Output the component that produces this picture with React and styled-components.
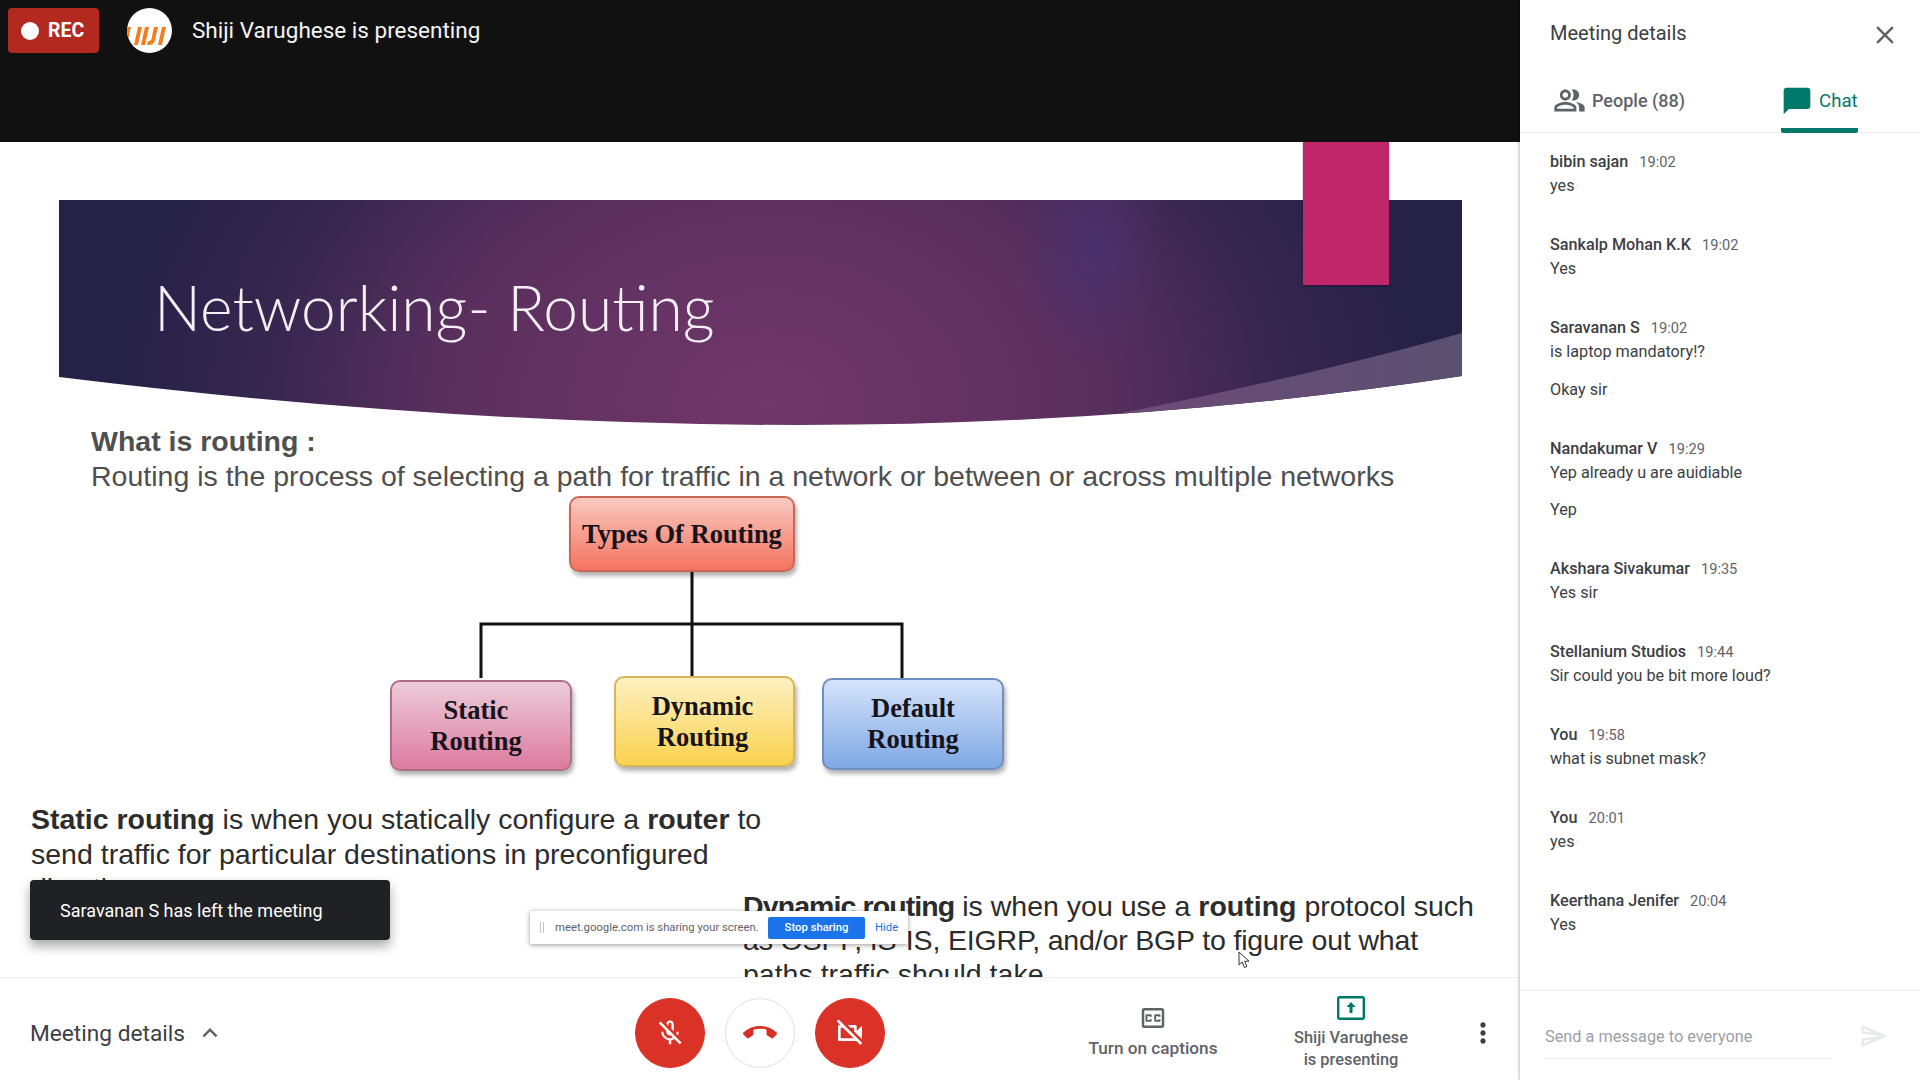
import styled, { createGlobalStyle } from "styled-components";
import {
  MdClose,
  MdOutlinePeopleAlt,
  MdChatBubble,
  MdExpandLess,
  MdOutlineMicOff,
  MdCallEnd,
  MdOutlineVideocamOff,
  MdOutlineClosedCaption,
  MdMoreVert,
  MdOutlineSend,
} from "react-icons/md";

const messages = [
  { name: "bibin sajan", time: "19:02", lines: ["yes"] },
  { name: "Sankalp Mohan K.K", time: "19:02", lines: ["Yes"] },
  { name: "Saravanan S", time: "19:02", lines: ["is laptop mandatory!?", "Okay sir"] },
  { name: "Nandakumar V", time: "19:29", lines: ["Yep already u are auidiable", "Yep"] },
  { name: "Akshara Sivakumar", time: "19:35", lines: ["Yes sir"] },
  { name: "Stellanium Studios", time: "19:44", lines: ["Sir could you be bit more loud?"] },
  { name: "You", time: "19:58", lines: ["what is subnet mask?"] },
  { name: "You", time: "20:01", lines: ["yes"] },
  { name: "Keerthana Jenifer", time: "20:04", lines: ["Yes"] },
];

const nodes = [
  { label: ["Types Of Routing"], x: 569, y: 496, w: 226, h: 76, from: "#f9c9c0", to: "#f4735f", edge: "#c9665a", nudge: 0 },
  { label: ["Static", "Routing"], x: 390, y: 680, w: 182, h: 91, from: "#eccbd8", to: "#dd7ba0", edge: "#ad6f88", nudge: 10 },
  { label: ["Dynamic", "Routing"], x: 614, y: 676, w: 181, h: 91, from: "#fdf0c0", to: "#fbd24f", edge: "#d8b45a", nudge: 4 },
  { label: ["Default", "Routing"], x: 822, y: 678, w: 182, h: 92, from: "#d5e3fb", to: "#7fa8e4", edge: "#6f8fc0", nudge: 0 },
];

const bannerShape = "M0 0H1403V176Q1080 225 740 225Q390 225 0 177Z";

const GlobalStyle = createGlobalStyle`
  html, body {
    margin: 0;
    padding: 0;
    background: #fff;
  }
  body {
    font-family: Roboto, "Noto Sans", sans-serif;
  }
`;

const App = () => {
  return (
    <>
      <GlobalStyle />
      <Page>
        <Main>
          <TopBar>
            <RecBadge>
              <RecDot />
              REC
            </RecBadge>
            <Avatar>
              <svg width="45" height="45" viewBox="0 0 45 45">
                <g fill="#f57c1f">
                  <path d="M0 19h4l-4 18z" />
                  <path d="M11 19h4l-4 18H7z" />
                  <path d="M18 19h4l-4 18h-4z" />
                  <path d="M27 19h4l-3 13q-1 5-6 5h-2l1-4h1q2 0 2.5-2z" />
                  <path d="M35 19h4l-4 18h-4z" />
                </g>
              </svg>
            </Avatar>
            <PresenterName>Shiji Varughese is presenting</PresenterName>
          </TopBar>

          <Slide>
            <Banner viewBox="0 0 1403 225" width="1403" height="225">
              <defs>
                <radialGradient id="bannerGlow" gradientUnits="userSpaceOnUse" cx="710" cy="190" r="650" gradientTransform="translate(0 60) scale(1 .75)">
                  <stop offset="0" stopColor="#71386a" />
                  <stop offset="0.5" stopColor="#5a2f5e" />
                  <stop offset="0.8" stopColor="#34264f" />
                  <stop offset="1" stopColor="#262147" />
                </radialGradient>
                <radialGradient id="bannerSpot">
                  <stop offset="0" stopColor="#4a3270" stopOpacity="0.85" />
                  <stop offset="1" stopColor="#4a3270" stopOpacity="0" />
                </radialGradient>
                <linearGradient id="bannerWedge" x1="0" y1="0" x2="1" y2="0">
                  <stop offset="0" stopColor="#6e4a78" />
                  <stop offset="1" stopColor="#5a5070" />
                </linearGradient>
                <clipPath id="bannerClip">
                  <path d={bannerShape} />
                </clipPath>
              </defs>
              <path d={bannerShape} fill="url(#bannerGlow)" />
              <ellipse cx="1031" cy="50" rx="75" ry="115" fill="url(#bannerSpot)" clipPath="url(#bannerClip)" />
              <path d="M1403 133Q1265 172.5 1058 214V230H1403Z" fill="url(#bannerWedge)" clipPath="url(#bannerClip)" />
            </Banner>
            <Bookmark />
            <SlideTitle>Networking- Routing</SlideTitle>

            <Lead>
              <strong>What is routing :</strong>
              <br />
              Routing is the process of selecting a path for traffic in a network or between or across multiple networks
            </Lead>

            <Connectors viewBox="0 0 1520 835" width="1520" height="835">
              <path d="M692 430V534M481 536V482H902V536" fill="none" stroke="#111" strokeWidth="3" />
            </Connectors>
            {nodes.map((node) => (
              <DiagramNode
                key={node.label[0]}
                $x={node.x}
                $y={node.y - 142}
                $w={node.w}
                $h={node.h}
                $from={node.from}
                $to={node.to}
                $edge={node.edge}
                $nudge={node.nudge}
              >
                {node.label.map((line) => (
                  <span key={line}>{line}</span>
                ))}
              </DiagramNode>
            ))}

            <StaticNote>
              <strong>Static routing</strong> is when you statically configure a <strong>router</strong> to send traffic
              for particular destinations in preconfigured directions.
            </StaticNote>
            <DynamicNote>
              <NarrowBold>Dynamic routing</NarrowBold> is when you use a <strong>routing</strong> protocol such{" "}
              <TightRun>as OSPF, IS-IS, EIGRP, and/or BGP to figure out what</TightRun> paths traffic should take
            </DynamicNote>

            <Toast>Saravanan S has left the meeting</Toast>

            <ShareBar>
              <Grip />
              <ShareText>meet.google.com is sharing your screen.</ShareText>
              <StopButton>Stop sharing</StopButton>
              <HideLink>Hide</HideLink>
            </ShareBar>

            <Pointer width="14" height="18" viewBox="0 0 14 18">
              <path d="M1 1v13l3.2-3 2.3 5.5 2.4-1-2.3-5.3H11z" fill="#fff" stroke="#333" strokeWidth="1" />
            </Pointer>
          </Slide>

          <BottomBar>
            <DetailsToggle>
              Meeting details
              <MdExpandLess size={30} color="#5f6368" />
            </DetailsToggle>
            <CallControls>
              <RoundButton $danger>
                <MdOutlineMicOff size={30} />
              </RoundButton>
              <RoundButton>
                <MdCallEnd size={34} />
              </RoundButton>
              <RoundButton $danger>
                <MdOutlineVideocamOff size={32} />
              </RoundButton>
            </CallControls>
            <Actions>
              <CaptionsAction>
                <MdOutlineClosedCaption size={30} color="#5f6368" />
                <span>Turn on captions</span>
              </CaptionsAction>
              <PresentAction>
                <svg width="28" height="24" viewBox="0 0 28 24">
                  <rect x="1.2" y="1.2" width="25.6" height="21.6" rx="1.5" fill="none" stroke="#00796b" strokeWidth="2.4" />
                  <path d="M14 6l-4.5 5h3v6h3v-6h3z" fill="#00796b" />
                </svg>
                <span>
                  Shiji Varughese
                  <br />
                  is presenting
                </span>
              </PresentAction>
              <MoreButton>
                <MdMoreVert size={32} />
              </MoreButton>
            </Actions>
          </BottomBar>
        </Main>

        <Sidebar>
          <SideHeader>
            <SideTitle>Meeting details</SideTitle>
            <MdClose size={30} color="#5f6368" />
          </SideHeader>
          <Tabs>
            <Tab>
              <MdOutlinePeopleAlt size={33} />
              People (88)
            </Tab>
            <Tab $active>
              <MdChatBubble size={32} />
              Chat
            </Tab>
          </Tabs>
          <ChatList>
            {messages.map((msg, i) => (
              <MessageGroup key={i}>
                <MessageHead>
                  <Sender>{msg.name}</Sender>
                  <Time>{msg.time}</Time>
                </MessageHead>
                {msg.lines.map((line) => (
                  <MessageLine key={line}>{line}</MessageLine>
                ))}
              </MessageGroup>
            ))}
          </ChatList>
          <Composer>
            <ComposerInput>Send a message to everyone</ComposerInput>
            <MdOutlineSend size={30} color="#e8eaed" />
          </Composer>
        </Sidebar>
      </Page>
    </>
  );
};

const Page = styled.div`
  width: 1920px;
  height: 1080px;
  display: grid;
  grid-template-columns: 1520px 400px;
  overflow: hidden;
  background: #fff;
`;

const Main = styled.div`
  display: flex;
  flex-direction: column;
  min-width: 0;
`;

const TopBar = styled.div`
  height: 142px;
  flex: none;
  box-sizing: border-box;
  background: #111111;
  padding: 8px;
  display: flex;
  align-items: flex-start;
`;

const RecBadge = styled.div`
  width: 91px;
  height: 45px;
  box-sizing: border-box;
  padding-left: 13px;
  display: flex;
  align-items: center;
  gap: 9px;
  background: #b3291f;
  border-radius: 4px;
  color: #fff;
  font-size: 19.5px;
  font-weight: 700;
`;

const RecDot = styled.span`
  width: 18px;
  height: 18px;
  border-radius: 50%;
  background: #fff;
`;

const Avatar = styled.div`
  width: 45px;
  height: 45px;
  margin-left: 28px;
  border-radius: 50%;
  background: #fff;
  overflow: hidden;
  svg {
    display: block;
  }
`;

const PresenterName = styled.div`
  margin-left: 20px;
  line-height: 45px;
  font-size: 22.5px;
  color: #f5f5f5;
`;

/* the shared slide is a free canvas, so what sits on it is placed by coordinates */
const Slide = styled.div`
  position: relative;
  flex: 1;
  overflow: hidden;
  background: #fff;
`;

const Banner = styled.svg`
  position: absolute;
  left: 59px;
  top: 58px;
`;

const Bookmark = styled.div`
  position: absolute;
  left: 1303px;
  top: 0;
  width: 86px;
  height: 143px;
  background: #c0266a;
  box-shadow: 0 1px 2px rgba(0, 0, 0, 0.4);
`;

const SlideTitle = styled.div`
  position: absolute;
  left: 154px;
  top: 127px;
  font-family: Lato, sans-serif;
  font-weight: 300;
  font-size: 62.3px;
  line-height: 76px;
  color: #f3eff3;
  white-space: nowrap;
`;

const Lead = styled.div`
  position: absolute;
  left: 91px;
  top: 282px;
  font-family: "Liberation Sans", Arial, sans-serif;
  font-size: 28.5px;
  line-height: 35px;
  color: #4f4f4f;
  white-space: nowrap;
`;

const Connectors = styled.svg`
  position: absolute;
  left: 0;
  top: 0;
`;

const DiagramNode = styled.div`
  position: absolute;
  left: ${(p) => p.$x}px;
  top: ${(p) => p.$y}px;
  width: ${(p) => p.$w}px;
  height: ${(p) => p.$h}px;
  box-sizing: border-box;
  padding-right: ${(p) => p.$nudge}px;
  display: flex;
  flex-direction: column;
  align-items: center;
  justify-content: center;
  border: 2px solid ${(p) => p.$edge};
  border-radius: 10px;
  background: linear-gradient(${(p) => p.$from}, ${(p) => p.$to});
  box-shadow: 2px 4px 4px rgba(0, 0, 0, 0.3);
  font-family: "Liberation Serif", "Times New Roman", serif;
  font-weight: 700;
  font-size: 26.5px;
  line-height: 31px;
  color: #16131a;
`;

const Note = styled.div`
  position: absolute;
  width: 745px;
  font-family: "Liberation Sans", Arial, sans-serif;
  font-size: 28.5px;
  line-height: 34.5px;
  color: #2c2c2c;
`;

const StaticNote = styled(Note)`
  left: 31px;
  top: 660px;
`;

const DynamicNote = styled(Note)`
  left: 743px;
  top: 747px;
  line-height: 34px;
`;

const NarrowBold = styled.strong`
  letter-spacing: -0.9px;
`;

const TightRun = styled.span`
  letter-spacing: -0.16px;
`;

const Toast = styled.div`
  position: absolute;
  left: 30px;
  top: 738px;
  width: 360px;
  height: 60px;
  box-sizing: border-box;
  padding-left: 30px;
  display: flex;
  align-items: center;
  background: #202124;
  border-radius: 4px;
  box-shadow: 0 6px 12px rgba(0, 0, 0, 0.35);
  color: #fff;
  font-size: 18px;
`;

const ShareBar = styled.div`
  position: absolute;
  left: 530px;
  top: 769px;
  width: 378px;
  height: 33px;
  box-sizing: border-box;
  display: flex;
  align-items: center;
  background: #fff;
  box-shadow: 0 1px 5px rgba(0, 0, 0, 0.4);
  font-size: 11.3px;
`;

const Grip = styled.span`
  width: 4px;
  height: 11px;
  margin: 0 0 0 10px;
  border-left: 1px solid #c4c4c4;
  border-right: 1px solid #c4c4c4;
  box-sizing: border-box;
`;

const ShareText = styled.span`
  margin-left: 11px;
  width: 213px;
  color: #5f6368;
  white-space: nowrap;
`;

const StopButton = styled.span`
  width: 97px;
  height: 22px;
  display: flex;
  align-items: center;
  justify-content: center;
  background: #1a73e8;
  border-radius: 2px;
  color: #fff;
  font-weight: 500;
`;

const HideLink = styled.span`
  margin-left: 10px;
  color: #1a73e8;
`;

const Pointer = styled.svg`
  position: absolute;
  left: 1238px;
  top: 809px;
`;

const BottomBar = styled.div`
  height: 103px;
  flex: none;
  box-sizing: border-box;
  padding-top: 8px;
  border-top: 1px solid #eceded;
  background: #fff;
  display: grid;
  grid-template-columns: 1fr auto 1fr;
  align-items: center;
`;

const DetailsToggle = styled.div`
  padding-left: 30px;
  display: flex;
  align-items: center;
  gap: 10px;
  font-size: 22.7px;
  color: #3c4043;
`;

const CallControls = styled.div`
  display: flex;
  gap: 20px;
`;

const RoundButton = styled.div`
  width: 70px;
  height: 70px;
  box-sizing: border-box;
  border-radius: 50%;
  display: flex;
  align-items: center;
  justify-content: center;
  background: ${(p) => (p.$danger ? "#da3226" : "#fff")};
  border: 1px solid ${(p) => (p.$danger ? "#da3226" : "#e0e0e0")};
  color: ${(p) => (p.$danger ? "#fff" : "#d93025")};
`;

const Actions = styled.div`
  display: flex;
  align-items: center;
  justify-content: flex-end;
  padding-right: 21px;
`;

const ActionItem = styled.div`
  display: flex;
  flex-direction: column;
  align-items: center;
  text-align: center;
  font-weight: 500;
  color: #5f6368;
`;

const CaptionsAction = styled(ActionItem)`
  width: 160px;
  gap: 5px;
  margin-top: -6px;
  font-size: 17.2px;
`;

const PresentAction = styled(ActionItem)`
  width: 170px;
  margin-left: 33px;
  gap: 7px;
  font-size: 16.4px;
  line-height: 22px;
`;

const MoreButton = styled.div`
  width: 32px;
  margin-left: 31px;
  color: #3c4043;
  display: flex;
`;

const Sidebar = styled.aside`
  display: flex;
  flex-direction: column;
  background: #fff;
  box-shadow: -1px 0 3px rgba(0, 0, 0, 0.25);
  position: relative;
`;

const SideHeader = styled.div`
  height: 66px;
  flex: none;
  box-sizing: border-box;
  padding: 3px 20px 0 30px;
  display: flex;
  align-items: center;
  justify-content: space-between;
`;

const SideTitle = styled.div`
  margin-bottom: 4px;
  font-size: 20px;
  color: #3c4043;
`;

const Tabs = styled.div`
  height: 67px;
  flex: none;
  box-sizing: border-box;
  border-bottom: 1px solid #eeeeee;
  padding-left: 33px;
  display: flex;
`;

const Tab = styled.div`
  height: 67px;
  box-sizing: border-box;
  display: flex;
  align-items: center;
  gap: 6px;
  font-size: ${(p) => (p.$active ? "18.6px" : "18px")};
  font-weight: ${(p) => (p.$active ? 400 : 500)};
  color: ${(p) => (p.$active ? "#00796b" : "#5f6368")};
  margin-left: ${(p) => (p.$active ? "96px" : "0")};
  padding-top: 7px;
  border-bottom: 5px solid ${(p) => (p.$active ? "#00796b" : "transparent")};
  border-radius: 0 0 2px 2px;
`;

const ChatList = styled.div`
  flex: 1;
  padding: 17px 30px 0;
`;

const MessageGroup = styled.div`
  margin-bottom: 35px;
`;

const MessageHead = styled.div`
  display: flex;
  align-items: baseline;
  gap: 11px;
  line-height: 24px;
`;

const Sender = styled.span`
  font-size: 16.2px;
  font-weight: 500;
  color: #3c4043;
`;

const Time = styled.span`
  font-size: 14.6px;
  color: #5f6368;
`;

const MessageLine = styled.div`
  font-size: 16.2px;
  line-height: 24px;
  color: #3c4043;
  & + & {
    margin-top: 13.5px;
  }
`;

const Composer = styled.div`
  height: 90px;
  flex: none;
  box-sizing: border-box;
  border-top: 1px solid #eeeeee;
  padding: 0 31px 0 25px;
  display: flex;
  align-items: center;
  justify-content: space-between;
`;

const ComposerInput = styled.div`
  width: 286px;
  height: 36px;
  margin-top: 10px;
  border-bottom: 1px solid #eeeeee;
  font-size: 16.3px;
  line-height: 29px;
  color: #9aa0a6;
  white-space: nowrap;
`;

export default App;
